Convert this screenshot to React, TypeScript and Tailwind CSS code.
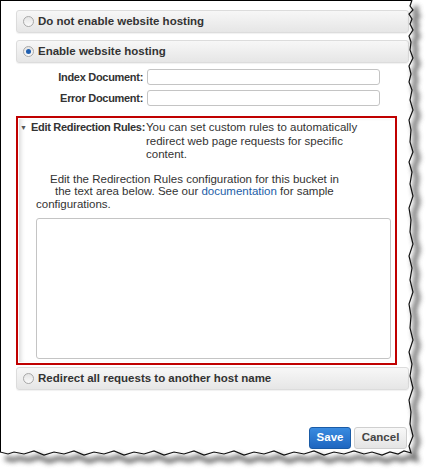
import React from 'react'

function Radio({ checked }: { checked?: boolean }) {
  return (
    <span className="flex h-[11px] w-[11px] shrink-0 items-center justify-center rounded-full border border-[#a8a8a8] bg-gradient-to-b from-[#e4e4e4] to-[#fafafa]">
      {checked && <span className="h-[5px] w-[5px] rounded-full bg-[#1f5fb0]" />}
    </span>
  )
}

function OptionBar({ label, checked }: { label: string; checked?: boolean }) {
  return (
    <div className="flex h-[23px] items-center gap-[4px] rounded-[3px] border border-[#dcdcdc] bg-gradient-to-b from-[#f7f7f7] to-[#e6e6e6] pl-[6px] shadow-[0_1px_1px_rgba(0,0,0,0.06)]">
      <Radio checked={checked} />
      <span className="text-[11.5px] font-bold text-[#333]">{label}</span>
    </div>
  )
}

function TornEdge() {
  // jagged right and bottom edges of the clipped screenshot
  const right =
    'M412,0 L410,6 L413,10 L409,14 L412,19 L410,24 L413,30 L409,36 L411,42 L410,50 L413,58 L409,66 L411,74 L409,82 L412,90 L410,100 L413,110 L409,120 L411,130 L410,142 L413,152 L409,162 L412,172 L410,184 L413,196 L409,208 L411,220 L410,232 L413,244 L409,256 L412,268 L410,280 L413,292 L409,304 L411,316 L410,328 L413,340 L409,352 L412,364 L410,376 L413,388 L409,400 L411,412 L410,424 L413,436 L409,446 L411,453'
  const bottom =
    'L404,451 L398,454 L390,452 L382,455 L372,452 L364,454 L354,451 L344,454 L334,452 L324,455 L314,451 L304,454 L294,452 L284,455 L274,451 L264,454 L254,452 L244,455 L234,451 L224,454 L214,452 L204,455 L194,451 L184,454 L174,452 L164,455 L154,451 L144,454 L134,452 L124,455 L114,451 L104,454 L94,452 L84,455 L74,451 L64,454 L54,452 L44,455 L34,451 L24,454 L14,452 L8,454 L0,452'
  return (
    <svg className="pointer-events-none absolute left-0 top-0" width="430" height="473" viewBox="0 0 430 473">
      <defs>
        <filter id="blur" x="-10%" y="-10%" width="130%" height="130%">
          <feGaussianBlur stdDeviation="2.5" />
        </filter>
      </defs>
      <path d={`${right} ${bottom} L0,473 L430,473 L430,0 Z`} fill="#fff" />
      <path d={`${right} ${bottom}`} transform="translate(5,6)" fill="none" stroke="#555" strokeWidth="5" filter="url(#blur)" opacity="0.8" />
      <path d={`${right} ${bottom}`} fill="none" stroke="#111" strokeWidth="1.2" />
    </svg>
  )
}

export default function App() {
  return (
    <div className="relative h-[473px] w-[430px] overflow-hidden bg-white font-['Liberation_Sans',Arial,sans-serif] text-[11.5px] text-[#333]">
      <div className="h-[453px] w-[412px] border-l-[1.5px] border-t-[1.5px] border-black pl-[15px] pr-[3px] pt-[9px]">
        <div className="flex flex-col gap-[7px]">
          <OptionBar label="Do not enable website hosting" />
          <OptionBar label="Enable website hosting" checked />
        </div>

        <div className="mt-[6px] flex flex-col gap-[4px] pr-[29px]">
          <div className="flex items-center">
            <span className="w-[131px] pr-[4px] text-right text-[11px] font-bold tracking-[-0.3px]">Index Document:</span>
            <input className="h-[16px] flex-1 rounded-[3px] border border-[#c4c4c4] bg-white" />
          </div>
          <div className="flex items-center">
            <span className="w-[131px] pr-[4px] text-right text-[11px] font-bold tracking-[-0.3px]">Error Document:</span>
            <input className="h-[16px] flex-1 rounded-[3px] border border-[#c4c4c4] bg-white" />
          </div>
        </div>

        <div className="mt-[10px] mr-[12px] border-2 border-[#c00000] p-px">
          <div className="bg-white pb-[3px] shadow-[inset_4px_0_4px_-2px_rgba(0,0,0,0.15)]">
            <div className="flex pt-[2px] leading-[13.5px]">
              <span className="flex w-[125px] shrink-0 items-start whitespace-nowrap pl-px">
                <span className="mr-[4px] mt-[3px] text-[7px] leading-[7px] text-[#555]">▼</span>
                <span className="text-[11px] font-bold tracking-[-0.3px]">Edit Redirection Rules:</span>
              </span>
              <span className="pl-[2px] pr-[20px]">
                You can set custom rules to automatically redirect web page requests for specific content.
              </span>
            </div>
            <div className="mt-[11px] leading-[12.5px]">
              <div className="pl-[31px]">Edit the Redirection Rules configuration for this bucket in</div>
              <div className="pl-[36px]">
                the text area below. See our <span className="text-[#1c5ea8]">documentation</span> for sample
              </div>
              <div className="pl-[17px]">configurations.</div>
            </div>
            <div className="ml-[17px] mr-[3px] mt-[8px] h-[141px] rounded-[3px] border border-[#c4c4c4]" />
          </div>
        </div>

        <div className="mt-[2px]">
          <OptionBar label="Redirect all requests to another host name" />
        </div>

        <div className="mt-[37px] flex justify-end gap-[3px] pr-[2px]">
          <button className="h-[22px] w-[42px] rounded-[3px] border border-[#1a5ba6] bg-gradient-to-b from-[#3a8be0] to-[#1e66c0] text-[11.5px] font-bold text-white">
            Save
          </button>
          <button className="h-[22px] w-[53px] rounded-[3px] border border-[#cfcfcf] bg-gradient-to-b from-[#f8f8f8] to-[#e4e4e4] text-[11.5px] font-bold text-[#444]">
            Cancel
          </button>
        </div>
      </div>
      <TornEdge />
    </div>
  )
}
